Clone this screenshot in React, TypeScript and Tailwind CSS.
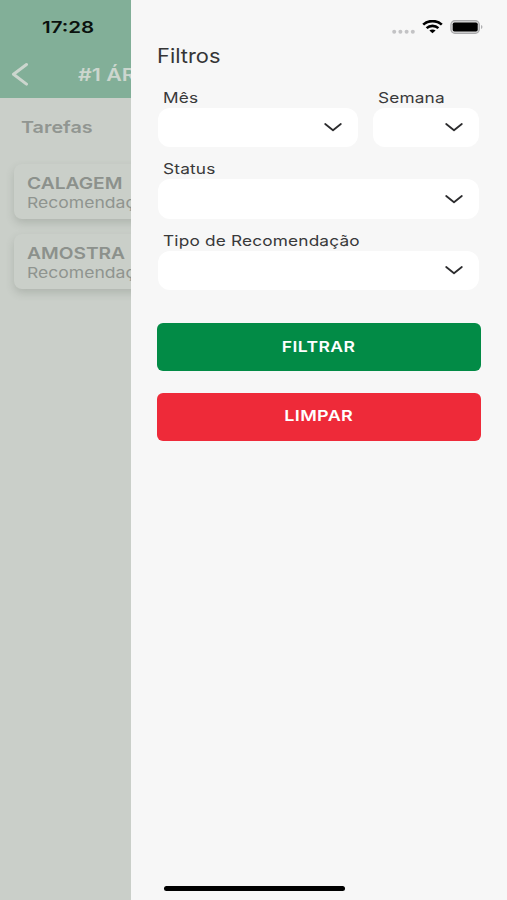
import type { ReactNode } from "react"

interface Tarefa {
  titulo: string
  descricao: string
}

interface CampoSelectProps {
  label: ReactNode
  className?: string
}

const tarefas: Tarefa[] = [
  { titulo: "CALAGEM", descricao: "Recomendação" },
  { titulo: "AMOSTRA", descricao: "Recomendação" },
]

function CampoSelect({ label, className = "" }: CampoSelectProps) {
  return (
    <div className={className}>
      <label className="block h-[21px] pl-[5px] text-[14.5px] leading-[21px] tracking-[0.01em] whitespace-nowrap text-[#39393a]">
        <span className="inline-block origin-left scale-x-[1.19]">{label}</span>
      </label>
      <button className="flex h-[39.5px] w-full items-center justify-end rounded-xl bg-white pr-[16px]">
        <svg width="18" height="10" viewBox="0 0 18 10" fill="none" stroke="#2c2c2e" strokeWidth="1.8">
          <path d="M1.2 2 9 8.3 16.8 2" strokeLinecap="round" strokeLinejoin="round" />
        </svg>
      </button>
    </div>
  )
}

// Tela de tarefas, escurecida atrás do menu de filtros
function ListaTarefas() {
  return (
    <div className="h-full w-[131px] shrink-0 overflow-hidden bg-[#cacfc9]">
      <header className="h-[98px] bg-[#82af98]">
        <div className="pt-[17px] pl-[42px] text-[16px] leading-5 font-semibold text-[#0b120e]">
          <span className="inline-block origin-left scale-x-[1.28]">17:28</span>
        </div>
        <div className="mt-[25px] flex h-6 items-center pl-[11px] text-[#ccd6ce]">
          <svg className="shrink-0" width="18" height="24" viewBox="0 0 18 24" fill="none" stroke="currentColor" strokeWidth="3">
            <path d="M15.5 2.5 2.5 12.3l13 9.8" strokeLinecap="round" strokeLinejoin="round" />
          </svg>
          <span className="mt-[3px] ml-[49px] inline-block origin-left scale-x-[1.22] text-[17.5px] font-semibold whitespace-nowrap">
            #1 ÁREA
          </span>
        </div>
      </header>

      <h1 className="mt-[17px] pl-[21px] text-[16.5px] leading-6 font-semibold text-[#919691]">
        <span className="inline-block origin-left scale-x-[1.2]">Tarefas</span>
      </h1>

      <div className="mt-[25px] ml-[14px] flex w-[200px] flex-col gap-[15px]">
        {tarefas.map((tarefa) => (
          <div
            key={tarefa.titulo}
            className="h-[55px] rounded-lg bg-[#cacfc9] pt-[9px] pl-[13px] whitespace-nowrap shadow-[0_4px_8px_rgba(70,80,70,0.2)]"
          >
            <div className="h-5 text-[16px] leading-5 font-semibold text-[#8c918c]">
              <span className="inline-block origin-left scale-x-[1.2]">{tarefa.titulo}</span>
            </div>
            <div className="h-5 text-[15px] leading-[20px] text-[#8f948f]">
              <span className="inline-block origin-left scale-x-[1.17]">{tarefa.descricao}</span>
            </div>
          </div>
        ))}
      </div>
    </div>
  )
}

function IconesStatus() {
  return (
    <div className="flex h-[45.5px] items-start justify-end pr-[23px]">
      <svg className="mt-[29px]" width="24" height="5" viewBox="0 0 24 5" fill="#c3c3c5">
        <circle cx="2.2" cy="2.7" r="2" />
        <circle cx="8.4" cy="2.7" r="2" />
        <circle cx="14.6" cy="2.7" r="2" />
        <circle cx="20.8" cy="2.7" r="2" />
      </svg>
      <svg className="mt-[20px] ml-[6px]" width="21" height="14" viewBox="0 0 21 14" fill="none" stroke="#000" strokeWidth="2.6">
        <path d="M1.2 4.6C6.2-.1 14.8-.1 19.8 4.6" />
        <path d="M4.6 8.1c3.3-3 8.5-3 11.8 0" />
        <path d="m10.5 13.2-3.1-2.7c1.6-1.4 4.6-1.4 6.2 0Z" fill="#000" stroke="none" />
      </svg>
      <svg className="mt-[20px] ml-[7px]" width="34" height="14" viewBox="0 0 34 14">
        <rect x=".9" y=".7" width="28.4" height="12.6" rx="4" fill="#d8d8d8" stroke="#a9a9ab" strokeWidth="1.2" />
        <rect x="2.7" y="2.4" width="25" height="9.2" rx="1.8" fill="#000" />
        <path d="M31.2 5v4c1.6-.5 1.6-3.5 0-4Z" fill="#a0a0a2" />
      </svg>
    </div>
  )
}

function MenuFiltros() {
  return (
    <div className="flex h-full flex-1 flex-col bg-[#f7f7f7]">
      <IconesStatus />

      <h2 className="h-[20px] pl-[26px] text-[19.5px] leading-5 text-[#353536]">
        <span className="inline-block origin-left scale-x-[1.12]">Filtros</span>
      </h2>

      <div className="mt-[21px] flex flex-col gap-[11px] pr-[28px] pl-[27px]">
        <div className="flex gap-[15px]">
          <CampoSelect label="Mês" className="w-[200px]" />
          <CampoSelect label="Semana" className="flex-1" />
        </div>
        <CampoSelect label="Status" />
        <CampoSelect label="Tipo de Recomendação" />
      </div>

      <div className="mt-[33px] flex flex-col gap-[21.5px] pr-[26px] pl-[26px] text-[15px] font-semibold text-white">
        <button className="h-[48px] rounded-md bg-[#028b46]">
          <span className="inline-block scale-x-[1.17] tracking-[0.025em]">FILTRAR</span>
        </button>
        <button className="h-[48px] rounded-md bg-[#ee2a39]">
          <span className="inline-block scale-x-[1.2] tracking-[0.02em]">LIMPAR</span>
        </button>
      </div>

      {/* Indicador de início do iOS */}
      <div className="mt-auto mb-[9px] ml-[33px] h-[5.5px] w-[180.5px] rounded-full bg-black" />
    </div>
  )
}

export default function App() {
  return (
    <div className="flex h-[900px] w-[507px] overflow-hidden font-['Inter',sans-serif]">
      <ListaTarefas />
      <MenuFiltros />
    </div>
  )
}
